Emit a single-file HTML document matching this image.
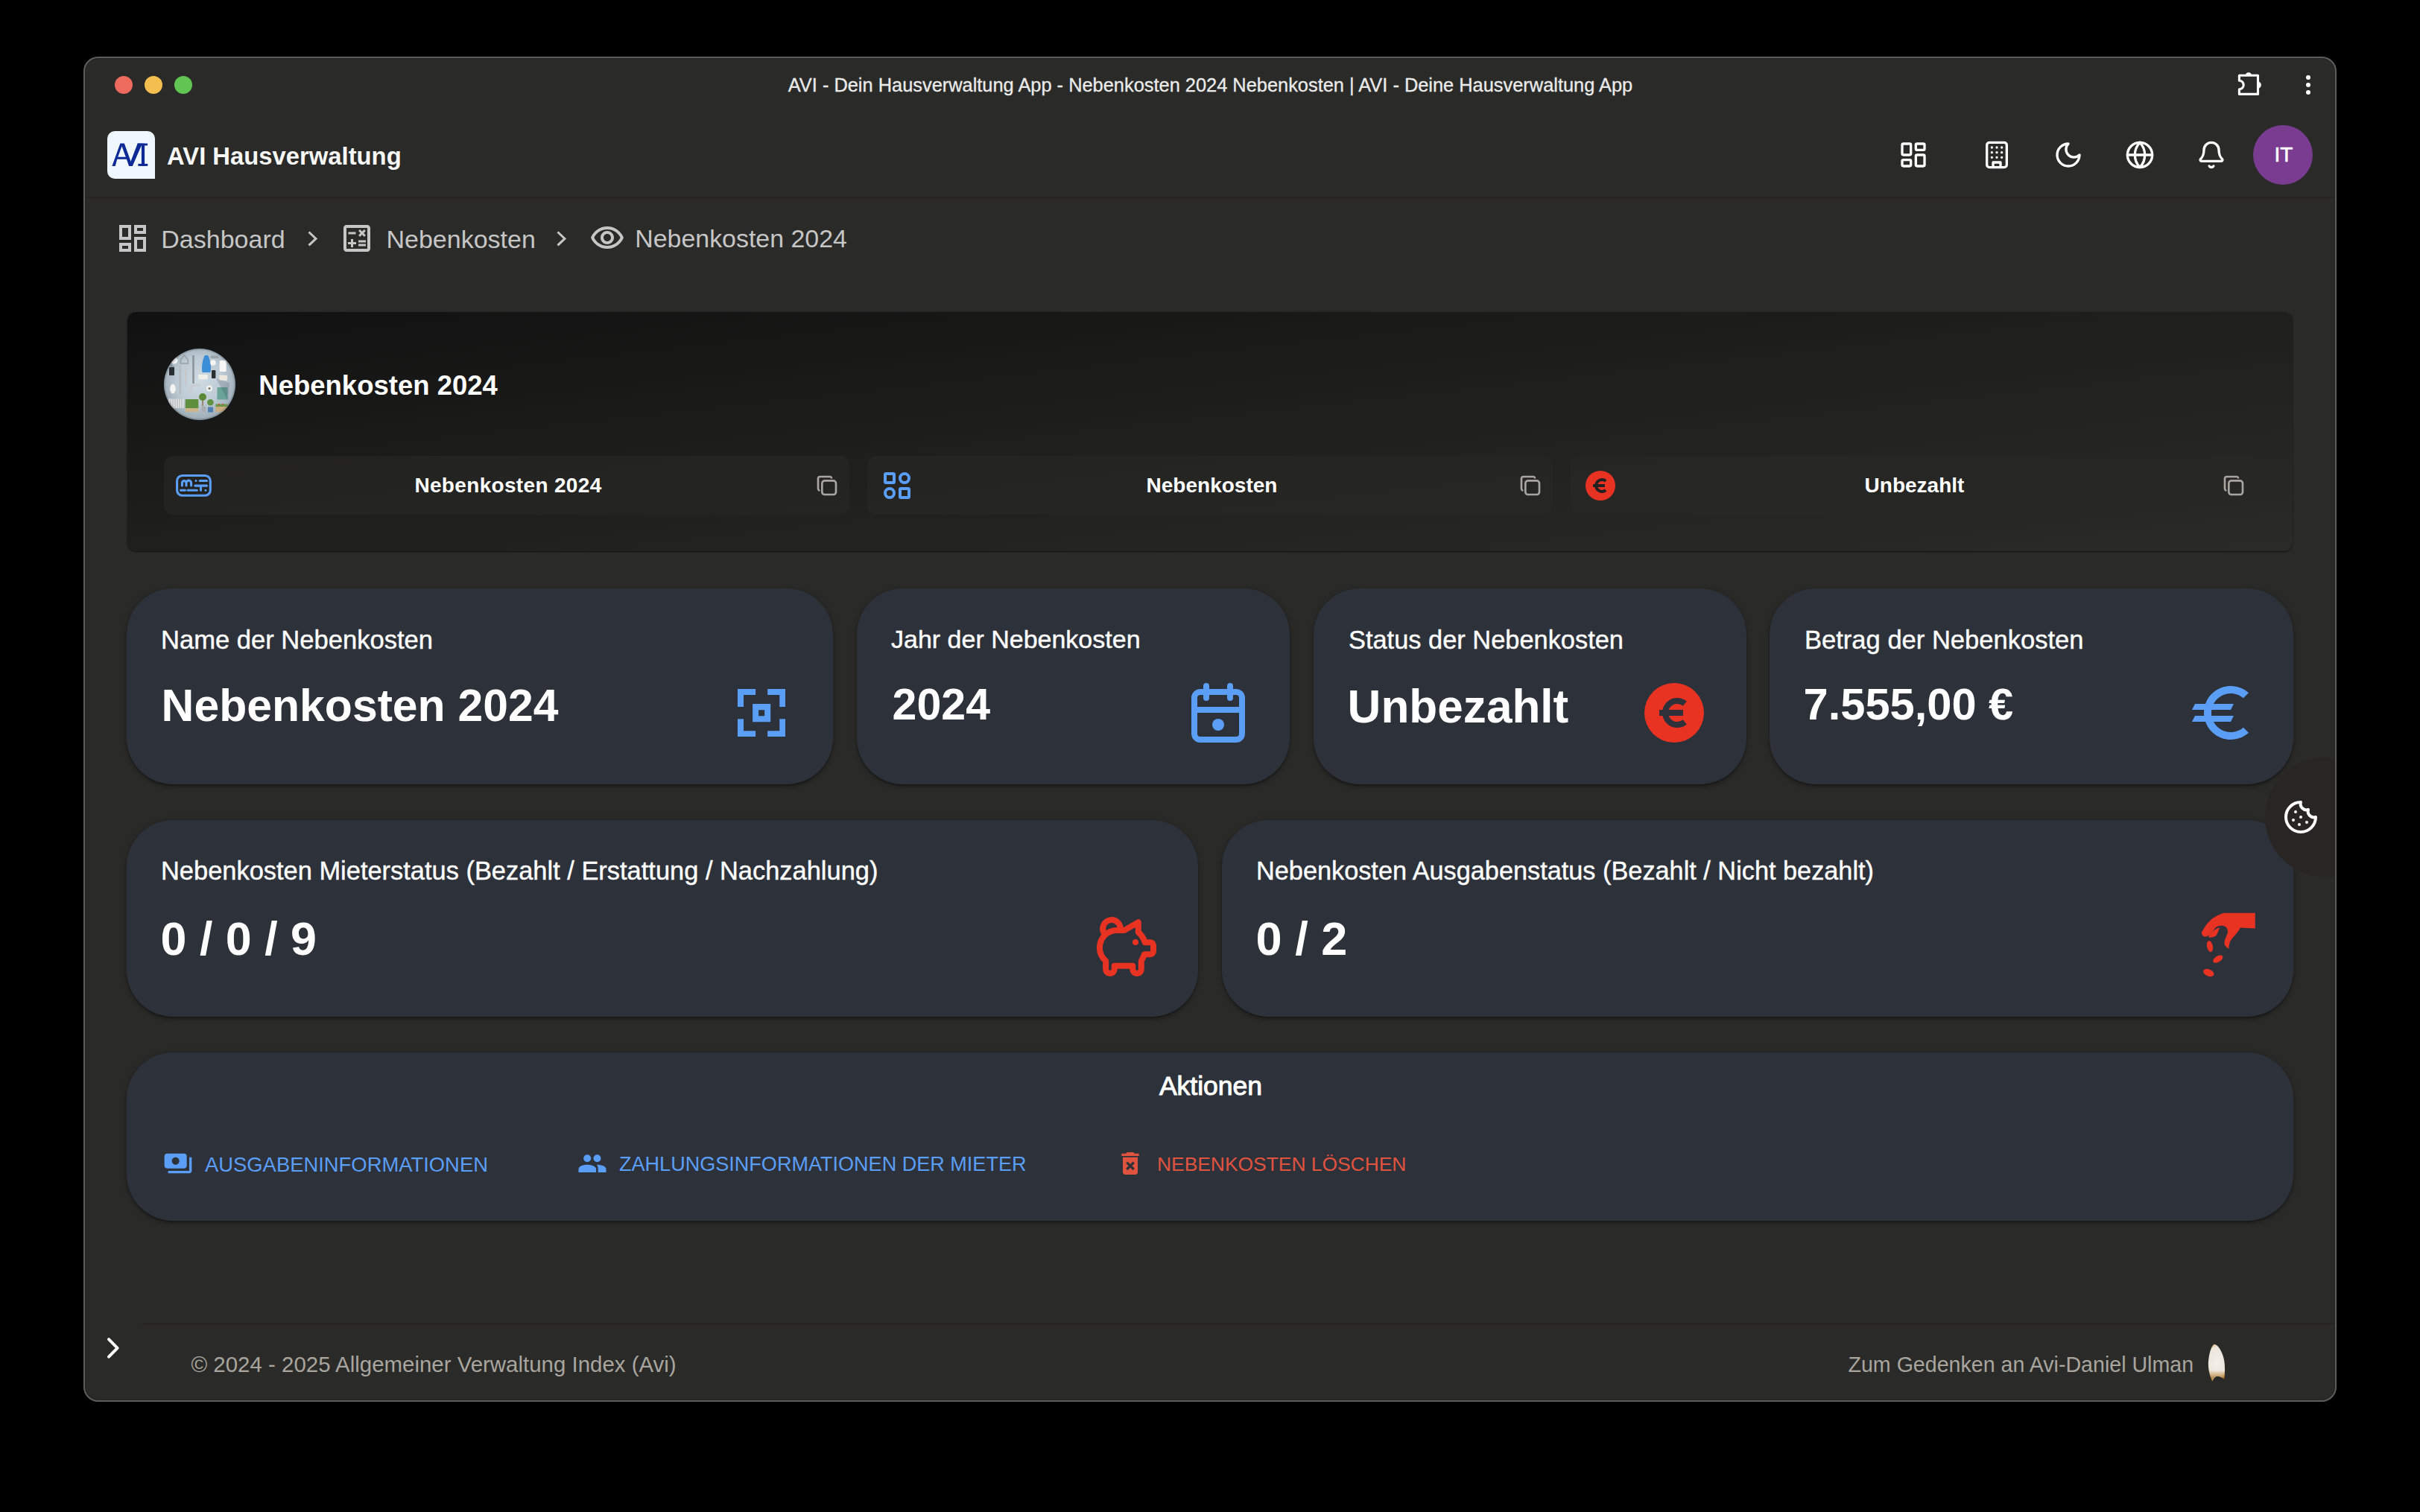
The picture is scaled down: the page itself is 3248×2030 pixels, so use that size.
<!DOCTYPE html>
<html><head><meta charset="utf-8"><title>AVI - Nebenkosten 2024</title>
<style>
html,body{margin:0;padding:0;}
body{width:3248px;height:2030px;background:#000;position:relative;overflow:hidden;font-family:"Liberation Sans", sans-serif;}
.t{position:absolute;white-space:nowrap;line-height:1;}
.card{position:absolute;background:#2d313a;border-radius:62px;box-shadow:0 3px 3px -2px rgba(0,0,0,.3),0 3px 4px 0 rgba(0,0,0,.2),0 1px 8px 0 rgba(0,0,0,.18);}
</style></head><body>
<div style="position:absolute;left:112px;top:76px;width:3024px;height:1806px;background:#2a2a28;border-radius:20px;box-shadow:inset 0 0 0 2px #5d5d5c,inset 0 0 0 3px #222221;"></div>
<div style="position:absolute;left:154px;top:102px;width:24px;height:24px;background:#ed6a5e;border-radius:50%;"></div>
<div style="position:absolute;left:194px;top:102px;width:24px;height:24px;background:#f5bf4f;border-radius:50%;"></div>
<div style="position:absolute;left:234px;top:102px;width:24px;height:24px;background:#61c554;border-radius:50%;"></div>
<div class="t" style="left:624.5px;width:2000px;text-align:center;top:101.5px;font-size:25.4px;color:#ebebeb;font-weight:400;-webkit-text-stroke:0.3px #ebebeb;">AVI - Dein Hausverwaltung App - Nebenkosten 2024 Nebenkosten | AVI - Deine Hausverwaltung App</div>
<svg style="position:absolute;left:2995px;top:90px;" width="50" height="45" viewBox="2995 90 50 45"><path d="M3005.4 101.3 H3030.5 V126.4 H3005.4 V119.8 A5.8 5.8 0 0 0 3005.4 108.2 Z" fill="none" stroke="#fff" stroke-width="3.1" stroke-linejoin="round"/><path d="M3013.6 101.5 A4.3 4.3 0 0 1 3022.2 101.5 Z" fill="#fff"/><path d="M3030.3 109.5 A4.6 4.6 0 0 1 3030.3 118.7 Z" fill="#fff"/></svg>
<div style="position:absolute;left:3095px;top:101px;width:6px;height:6px;background:#fff;border-radius:50%;"></div>
<div style="position:absolute;left:3095px;top:111px;width:6px;height:6px;background:#fff;border-radius:50%;"></div>
<div style="position:absolute;left:3095px;top:121px;width:6px;height:6px;background:#fff;border-radius:50%;"></div>
<div style="position:absolute;left:115px;top:264px;width:3018px;height:2px;background:#272323;"></div>
<div style="position:absolute;left:144px;top:176px;width:64px;height:64px;background:#f1f8fd;border-radius:10px 10px 0 10px;"></div>
<svg style="position:absolute;left:144px;top:176px;" width="64" height="64" viewBox="0 0 64 64"><g fill="#0d2a96"><path fill-rule="evenodd" d="M6.4 46.9 L17.4 16.6 L22.8 16.6 L33.8 46.9 L29.1 46.9 L25.9 37.7 L13.2 37.7 L10.7 46.9 Z M14.3 34.7 L24.8 34.7 L19.5 20.3 Z"/><path d="M29.1 46.9 L33.8 46.9 L45.9 19.3 L45.9 16.6 L40.7 16.6 Z"/><rect x="40.7" y="16.6" width="13.4" height="2.8"/><rect x="45.9" y="16.6" width="4.2" height="30.3"/><rect x="41.4" y="43.9" width="12.9" height="3"/></g></svg>
<div class="t" style="left:224.0px;top:193.8px;font-size:32.8px;color:#f7f7f5;font-weight:700;">AVI Hausverwaltung</div>
<svg style="position:absolute;left:2548px;top:188px;" width="40" height="40" viewBox="0 0 24 24"><g fill="none" stroke="#fff" stroke-width="2" stroke-linecap="round" stroke-linejoin="round"><rect x="3" y="3" width="7" height="9" rx="1"/><rect x="14" y="3" width="7" height="5" rx="1"/><rect x="14" y="12" width="7" height="9" rx="1"/><rect x="3" y="16" width="7" height="5" rx="1"/></g></svg>
<svg style="position:absolute;left:2660px;top:188px;" width="40" height="40" viewBox="0 0 24 24"><g fill="none" stroke="#fff" stroke-width="2" stroke-linecap="round" stroke-linejoin="round"><rect x="4" y="2" width="16" height="20" rx="2"/><path d="M9 22v-4h6v4"/><path d="M8 6h.01M16 6h.01M12 6h.01M12 10h.01M12 14h.01M16 10h.01M16 14h.01M8 10h.01M8 14h.01"/></g></svg>
<svg style="position:absolute;left:2756px;top:187.5px;" width="40" height="40" viewBox="0 0 24 24"><g fill="none" stroke="#fff" stroke-width="2" stroke-linecap="round" stroke-linejoin="round"><path d="M12 3a6 6 0 0 0 9 9 9 9 0 1 1-9-9Z"/></g></svg>
<svg style="position:absolute;left:2852px;top:188px;" width="40" height="40" viewBox="0 0 24 24"><g fill="none" stroke="#fff" stroke-width="2" stroke-linecap="round" stroke-linejoin="round"><circle cx="12" cy="12" r="10"/><path d="M12 2a14.5 14.5 0 0 0 0 20 14.5 14.5 0 0 0 0-20"/><path d="M2 12h20"/></g></svg>
<svg style="position:absolute;left:2948px;top:188px;" width="40" height="40" viewBox="0 0 24 24"><g fill="none" stroke="#fff" stroke-width="2" stroke-linecap="round" stroke-linejoin="round"><path d="M10.268 21a2 2 0 0 0 3.464 0"/><path d="M3.262 15.326A1 1 0 0 0 4 17h16a1 1 0 0 0 .74-1.673C19.41 13.956 18 12.499 18 8A6 6 0 0 0 6 8c0 4.499-1.411 5.956-2.738 7.326"/></g></svg>
<div style="position:absolute;left:3024px;top:168px;width:80px;height:80px;background:#7a3c91;border-radius:50%;"></div>
<div class="t" style="left:2065.0px;width:2000px;text-align:center;top:193.6px;font-size:28px;color:#fff;font-weight:400;-webkit-text-stroke:0.6px #fff;">IT</div>
<svg style="position:absolute;left:154px;top:296px;" width="48" height="48" viewBox="0 0 24 24"><path fill="#c6c6c6" d="M19 5v2h-4V5zM9 5v6H5V5zm10 8v6h-4v-6zM9 17v2H5v-2zM21 3h-8v6h8zM11 3H3v10h8zm10 8h-8v10h8zm-10 4H3v6h8z"/></svg>
<div class="t" style="left:216.3px;top:303.6px;font-size:34px;color:#c6c6c6;font-weight:400;">Dashboard</div>
<svg style="position:absolute;left:405px;top:305px;" width="30" height="30" viewBox="405 305 30 30"><path d="M414.5 311.5 L424 320.4 L414.5 329.3" fill="none" stroke="#c6c6c6" stroke-width="3"/></svg>
<svg style="position:absolute;left:455px;top:296px;" width="48" height="48" viewBox="0 0 24 24"><path fill="#c6c6c6" d="M19 3H5c-1.1 0-2 .9-2 2v14c0 1.1.9 2 2 2h14c1.1 0 2-.9 2-2V5c0-1.1-.9-2-2-2m0 16H5V5h14z"/><path fill="#c6c6c6" d="M11.25 7.72H6.25v1.5h5zM18 15.75h-5v1.5h5zm0-2.5h-5v1.5h5zM8 18h1.5v-2h2v-1.5h-2v-2H8v2H6v1.5h2zm6.09-7.05 1.41-1.41 1.41 1.41 1.06-1.06-1.41-1.42 1.41-1.41L16.91 6 15.5 7.41 14.09 6l-1.06 1.06 1.41 1.41-1.41 1.42z"/></svg>
<div class="t" style="left:518.5px;top:303.6px;font-size:34px;color:#c6c6c6;font-weight:400;">Nebenkosten</div>
<svg style="position:absolute;left:740px;top:305px;" width="30" height="30" viewBox="740 305 30 30"><path d="M748.5 311.5 L758 320.4 L748.5 329.3" fill="none" stroke="#c6c6c6" stroke-width="3"/></svg>
<svg style="position:absolute;left:790.5px;top:296px;" width="48" height="48" viewBox="0 0 24 24"><path fill="#c6c6c6" d="M12 6c3.79 0 7.17 2.13 8.82 5.5C19.17 14.87 15.79 17 12 17s-7.17-2.13-8.82-5.5C4.83 8.13 8.21 6 12 6m0-2C7 4 2.73 7.11 1 11.5 2.73 15.89 7 19 12 19s9.27-3.11 11-7.5C21.27 7.11 17 4 12 4m0 5c1.38 0 2.5 1.12 2.5 2.5S13.38 14 12 14s-2.5-1.12-2.5-2.5S10.62 9 12 9m0-2c-2.48 0-4.5 2.02-4.5 4.5S9.52 16 12 16s4.5-2.02 4.5-4.5S14.48 7 12 7"/></svg>
<div class="t" style="left:852.3px;top:303.6px;font-size:33.9px;color:#c6c6c6;font-weight:400;">Nebenkosten 2024</div>
<div style="position:absolute;left:171px;top:419px;width:2906px;height:321px;border-radius:12px;background:linear-gradient(to bottom right,#121111 0%,#1f1f1e 50%,#2a2a28 100%);box-shadow:0 1px 2px rgba(0,0,0,.55),0 0 1px rgba(0,0,0,.5);"></div>
<div style="position:absolute;left:220px;top:468px;width:96px;height:96px;border-radius:50%;background:radial-gradient(circle at 50% 45%,#cfdbe3 0%,#bccad3 45%,#9aa9b3 75%,#6d7a82 100%);"></div>
<svg style="position:absolute;left:220px;top:468px;" width="96" height="96" viewBox="0 0 96 96"><defs><clipPath id="ac"><circle cx="48" cy="48" r="48"/></clipPath></defs><g clip-path="url(#ac)"><circle cx="14" cy="16" r="4.5" fill="#eef0f0"/><path d="M22.4 15 L27.3 9.1 L32.3 15 V20 H22.4 Z" fill="none" stroke="#9a9fa3" stroke-width="1.6"/><rect x="38.2" y="9" width="2.6" height="38" fill="#8d9499"/><path d="M51.5 32 C50 24 52 14 55 9 H59 C62 14 64 24 62.5 32 Z" fill="#3a8ed8"/><rect x="62.4" y="9.6" width="11" height="3.4" rx="1.5" fill="#9ba1a5"/><circle cx="66" cy="19" r="3.8" fill="#f4f4f2"/><rect x="74.7" y="16" width="9" height="15" rx="1" fill="#f6f6f4"/><rect x="7" y="25" width="7" height="11" rx="1" fill="#2a2f33"/><rect x="20.3" y="23" width="3" height="38" fill="#b7bcc0"/><rect x="28" y="27" width="2.8" height="22" fill="#c5c9cc"/><rect x="46.3" y="35" width="12.6" height="6.4" fill="#f0eee8"/><rect x="64" y="29" width="5.4" height="11" rx="1" fill="#2b2f31"/><rect x="74.3" y="35.8" width="10.6" height="7" fill="#ece8df"/><ellipse cx="12" cy="54" rx="3.8" ry="6.5" fill="#f3f3f1"/><path d="M36 61 V53 C36 50 39 49 43 49 H49" fill="none" stroke="#c9cdd0" stroke-width="3"/><circle cx="61" cy="53.5" r="4" fill="#f2f2ef"/><circle cx="61" cy="53.5" r="1.5" fill="#6b6b68"/><rect x="71.5" y="52" width="14" height="16.5" rx="1" fill="#6aa398"/><rect x="6.3" y="67.3" width="20.3" height="12.7" fill="#e4e6e6"/><path d="M9 67v13M12 67v13M15 67v13M18 67v13M21 67v13M24 67v13" stroke="#9ea3a6" stroke-width="0.9"/><rect x="28.8" y="68" width="17.5" height="12" fill="#5d8f3d"/><rect x="28.8" y="80" width="17.5" height="5" fill="#cdb68c"/><circle cx="52" cy="65" r="5" fill="#5b8a36"/><rect x="51.3" y="69" width="1.4" height="8" fill="#8b6b45"/><circle cx="62.4" cy="72.2" r="4.3" fill="#5f9140"/><rect x="59" y="78.5" width="7" height="7" fill="#4e7fb3"/><rect x="50.5" y="77.8" width="5.6" height="7.8" fill="#a9adb0"/><rect x="69.4" y="78" width="16.2" height="7" fill="#c9ad80"/><rect x="69.4" y="74.5" width="16.2" height="3.5" fill="#6c9a4a"/><circle cx="74" cy="75" r="0.9" fill="#d23a2e"/><circle cx="79" cy="74.8" r="0.9" fill="#d23a2e"/><path d="M8 20 L14 24 L12 38 Z" fill="rgba(40,50,60,.25)"/><path d="M70 40 L88 46 L86 70 Z" fill="rgba(40,50,60,.18)"/></g><circle cx="48" cy="48" r="47" fill="none" stroke="rgba(30,40,50,.18)" stroke-width="2"/></svg>
<div class="t" style="left:347.3px;top:500.2px;font-size:36.5px;color:#fff;font-weight:700;">Nebenkosten 2024</div>
<div style="position:absolute;left:220px;top:612px;width:920px;height:79px;border-radius:12px;background:rgba(40,40,39,0.6);"></div>
<div style="position:absolute;left:1164px;top:612px;width:920px;height:79px;border-radius:12px;background:rgba(40,40,39,0.6);"></div>
<div style="position:absolute;left:2108px;top:612px;width:920px;height:79px;border-radius:12px;background:rgba(40,40,39,0.6);"></div>
<svg style="position:absolute;left:226px;top:625px;" width="70" height="55" viewBox="226 625 70 55"><g fill="none" stroke="#5b9ef6" stroke-width="3.1" stroke-linecap="round" stroke-linejoin="round"><rect x="237.6" y="638.5" width="44.7" height="26.7" rx="7"/><path d="M244.4 651.9 V648.4 A2.8 2.8 0 0 1 250 648.4 V651.9 M250 648.4 A3.3 3.3 0 0 1 256.6 648.4 V651.9"/><path d="M263 645.5 h.01 M268.2 645.5 H277.6 M261.8 652.1 H277.6 M269.5 652.1 V658.2 M276 658.3 h.01 M242.5 658.3 H248.5 M252 658.3 H264.4"/></g></svg>
<svg style="position:absolute;left:1179.8px;top:627.9px;" width="48" height="48" viewBox="0 0 24 24"><g fill="none" stroke="#5b9ef6" stroke-width="2" stroke-linecap="round" stroke-linejoin="round"><rect x="4" y="4" width="6" height="6" rx=".6"/><rect x="14" y="14" width="6" height="6" rx=".6"/><circle cx="17" cy="7" r="3"/><circle cx="7" cy="17" r="3"/></g></svg>
<svg style="position:absolute;left:2128px;top:632px;" width="40" height="40" viewBox="0 0 80 80"><circle cx="40" cy="40" r="40" fill="#e83323"/><path d="M54.3 27.7 A16 16 0 1 0 54.3 52.3" fill="none" stroke="#202020" stroke-width="8"/><rect x="20" y="36" width="32" height="8" fill="#202020"/></svg>
<svg style="position:absolute;left:1094.4px;top:636.4px;" width="32" height="32" viewBox="0 0 24 24"><g fill="none" stroke="#a9a6a1" stroke-width="2" stroke-linecap="round" stroke-linejoin="round"><path d="M7 9.667A2.667 2.667 0 0 1 9.667 7h8.666A2.667 2.667 0 0 1 21 9.667v8.666A2.667 2.667 0 0 1 18.333 21H9.667A2.667 2.667 0 0 1 7 18.333z"/><path d="M4.012 16.737A2.005 2.005 0 0 1 3 15V5c0-1.1.9-2 2-2h10c.75 0 1.158.385 1.5 1"/></g></svg>
<svg style="position:absolute;left:2038.4px;top:636.4px;" width="32" height="32" viewBox="0 0 24 24"><g fill="none" stroke="#a9a6a1" stroke-width="2" stroke-linecap="round" stroke-linejoin="round"><path d="M7 9.667A2.667 2.667 0 0 1 9.667 7h8.666A2.667 2.667 0 0 1 21 9.667v8.666A2.667 2.667 0 0 1 18.333 21H9.667A2.667 2.667 0 0 1 7 18.333z"/><path d="M4.012 16.737A2.005 2.005 0 0 1 3 15V5c0-1.1.9-2 2-2h10c.75 0 1.158.385 1.5 1"/></g></svg>
<svg style="position:absolute;left:2982.4px;top:636.4px;" width="32" height="32" viewBox="0 0 24 24"><g fill="none" stroke="#a9a6a1" stroke-width="2" stroke-linecap="round" stroke-linejoin="round"><path d="M7 9.667A2.667 2.667 0 0 1 9.667 7h8.666A2.667 2.667 0 0 1 21 9.667v8.666A2.667 2.667 0 0 1 18.333 21H9.667A2.667 2.667 0 0 1 7 18.333z"/><path d="M4.012 16.737A2.005 2.005 0 0 1 3 15V5c0-1.1.9-2 2-2h10c.75 0 1.158.385 1.5 1"/></g></svg>
<div class="t" style="left:-318.0px;width:2000px;text-align:center;top:637.6px;font-size:28px;color:#fff;font-weight:700;letter-spacing:0.33px;">Nebenkosten 2024</div>
<div class="t" style="left:626.5px;width:2000px;text-align:center;top:637.6px;font-size:28px;color:#fff;font-weight:700;">Nebenkosten</div>
<div class="t" style="left:1569.5px;width:2000px;text-align:center;top:637.6px;font-size:28px;color:#fff;font-weight:700;">Unbezahlt</div>
<div class="card" style="left:170px;top:790px;width:948px;height:263px;"></div>
<div class="card" style="left:1150px;top:790px;width:581px;height:263px;"></div>
<div class="card" style="left:1763px;top:790px;width:581px;height:263px;"></div>
<div class="card" style="left:2375px;top:790px;width:703px;height:263px;"></div>
<div class="card" style="left:170px;top:1100.5px;width:1438px;height:264.5px;"></div>
<div class="card" style="left:1640px;top:1100.5px;width:1438px;height:264.5px;"></div>
<div class="card" style="left:170px;top:1412.5px;width:2908px;height:226.5px;"></div>
<div class="t" style="left:216.0px;top:842.0px;font-size:34.57px;color:#fff;font-weight:400;-webkit-text-stroke:0.4px #fff;">Name der Nebenkosten</div>
<div class="t" style="left:1196.0px;top:840.6px;font-size:34px;color:#fff;font-weight:400;-webkit-text-stroke:0.4px #fff;">Jahr der Nebenkosten</div>
<div class="t" style="left:1810.0px;top:842.0px;font-size:34.4px;color:#fff;font-weight:400;-webkit-text-stroke:0.4px #fff;">Status der Nebenkosten</div>
<div class="t" style="left:2422.0px;top:842.0px;font-size:34.56px;color:#fff;font-weight:400;-webkit-text-stroke:0.4px #fff;">Betrag der Nebenkosten</div>
<div class="t" style="left:216.6px;top:917.4px;font-size:60.7px;color:#fff;font-weight:700;">Nebenkosten 2024</div>
<div class="t" style="left:1197.6px;top:915.6px;font-size:59.1px;color:#fff;font-weight:700;">2024</div>
<div class="t" style="left:1808.6px;top:917.6px;font-size:62.1px;color:#fff;font-weight:700;">Unbezahlt</div>
<div class="t" style="left:2420.6px;top:915.5px;font-size:59.6px;color:#fff;font-weight:700;">7.555,00 €</div>
<svg style="position:absolute;left:989.8px;top:924.8px;" width="64.3" height="64.3" viewBox="0 0 64 64"><g fill="#5b9ef6"><path d="M0 0H24V8H8V24H0Z"/><path d="M40 0H64V24H56V8H40Z"/><path d="M0 40H8V56H24V64H0Z"/><path d="M56 40H64V64H40V56H56Z"/><path fill-rule="evenodd" d="M20 20H44V44H20Z M28 28V36H36V28Z"/></g></svg>
<svg style="position:absolute;left:1586.9px;top:908.9px;" width="96" height="96" viewBox="0 0 24 24"><g fill="none" stroke="#5b9ef6" stroke-width="2" stroke-linecap="round" stroke-linejoin="round"><rect x="4" y="5" width="16" height="16" rx="2"/><path d="M16 3v4M8 3v4M4 11h16"/></g><circle cx="12" cy="16" r="2" fill="#5b9ef6"/></svg>
<svg style="position:absolute;left:2207px;top:917px;" width="80" height="80" viewBox="0 0 80 80"><circle cx="40" cy="40" r="40" fill="#e83323"/><path d="M54.3 27.7 A16 16 0 1 0 54.3 52.3" fill="none" stroke="#2e313a" stroke-width="8"/><rect x="20" y="36" width="32" height="8" fill="#2e313a"/></svg>
<svg style="position:absolute;left:2933.9px;top:909px;" width="96" height="96" viewBox="0 0 24 24"><path fill="#5b9ef6" d="M15 18.5c-2.51 0-4.68-1.42-5.76-3.5H15l1-2H8.58c-.05-.33-.08-.66-.08-1s.03-.67.08-1H15l1-2H9.24C10.32 6.92 12.5 5.5 15 5.5c1.61 0 3.09.59 4.23 1.570L21 5.3C19.41 3.87 17.3 3 15 3c-3.92 0-7.240 2.510-8.480 6H3l-1 2h4.060c-.04.330-.06.660-.06 1s.02.67.06 1H3l-1 2h4.52c1.24 3.49 4.56 6 8.48 6 2.31 0 4.41-.87 6-2.3l-1.78-1.77c-1.13.98-2.6 1.57-4.22 1.57"/></svg>
<div class="t" style="left:216.0px;top:1152.0px;font-size:34.43px;color:#fff;font-weight:400;-webkit-text-stroke:0.4px #fff;">Nebenkosten Mieterstatus (Bezahlt / Erstattung / Nachzahlung)</div>
<div class="t" style="left:1686.0px;top:1152.1px;font-size:34.29px;color:#fff;font-weight:400;-webkit-text-stroke:0.4px #fff;">Nebenkosten Ausgabenstatus (Bezahlt / Nicht bezahlt)</div>
<div class="t" style="left:215.6px;top:1229.0px;font-size:62.8px;color:#fff;font-weight:700;">0 / 0 / 9</div>
<div class="t" style="left:1685.6px;top:1229.0px;font-size:63.1px;color:#fff;font-weight:700;">0 / 2</div>
<svg style="position:absolute;left:1460px;top:1220px;" width="100" height="100" viewBox="0 0 100 100"><g fill="none" stroke="#e83323" stroke-width="8" stroke-linecap="round" stroke-linejoin="round"><path d="M21.5 32.5 A11.85 11.85 0 1 1 43.8 28"/><path d="M39.7 29.1 H48.9 L67.8 18.2 V31.7 C71.5 34.5 74.8 39.5 76.7 45.3 H84 A4 4 0 0 1 88 49.3 V57.2 A4 4 0 0 1 84 61.2 H76 C74.8 64.5 73.5 67.5 71.8 70.1 V81.3 A5.8 5.8 0 0 1 60.2 81.3 V76.7 H35.7 V81.3 A5.8 5.8 0 0 1 24.1 81.3 V70.1 C18.5 65 15.9 59 15.9 52.9 C15.9 39 26 29.1 39.7 29.1 Z"/></g><circle cx="64" cy="45" r="4" fill="#e83323"/></svg>
<svg style="position:absolute;left:2940px;top:1215px;" width="100" height="100" viewBox="0 0 100 100"><g fill="#e83323"><path d="M45.1 10.8 H86.8 V31.6 L66.7 30.6 C64 37 58 42 54.2 47.2 C52 50.5 51.6 55 51.4 58.7 C48 57 45.5 54 45.5 51.4 C45.5 45 50 40 50 36.1 C50 30 46 27.8 41.7 27.8 C37 27.8 34.5 29.5 32.6 31.5 C29 36 26 41 22.9 41.7 C19.5 43 16 43 14.6 37.5 C18 31 21 26 25 22.2 C31 16 38 13 45.1 10.8 Z"/><path d="M24 43.4 C26 38 32 32 39.6 30.2 C37 34 36.5 40 33 42 C30 43.5 27 43.8 24 43.4 Z"/><ellipse cx="26" cy="55.6" rx="3.9" ry="7.6" transform="rotate(-12 26 55.6)"/><ellipse cx="36.8" cy="72.6" rx="7.4" ry="3.9" transform="rotate(-32 36.8 72.6)"/><ellipse cx="24.3" cy="91" rx="7.6" ry="4.6" transform="rotate(22 24.3 91)"/></g></svg>
<div class="t" style="left:625.0px;width:2000px;text-align:center;top:1441.4px;font-size:35.5px;color:#fff;font-weight:400;-webkit-text-stroke:1px #fff;">Aktionen</div>
<svg style="position:absolute;left:219.2px;top:1542.2px;" width="40" height="40" viewBox="0 0 24 24"><path fill="#5b9ef6" d="M19 14V6c0-1.1-.9-2-2-2H3c-1.1 0-2 .9-2 2v8c0 1.1.9 2 2 2h14c1.1 0 2-.9 2-2m-9-1c-1.66 0-3-1.34-3-3s1.34-3 3-3 3 1.34 3 3-1.34 3-3 3m13-6v11c0 1.1-.9 2-2 2H4v-2h17V7z"/></svg>
<div class="t" style="left:275.0px;top:1550.1px;font-size:27.4px;color:#5b9ef6;font-weight:400;">AUSGABENINFORMATIONEN</div>
<svg style="position:absolute;left:770px;top:1540px;" width="50" height="45" viewBox="0 0 50 45"><g fill="#5b9ef6"><circle cx="18.2" cy="15.2" r="5"/><circle cx="31.5" cy="15.2" r="5"/><path d="M6.5 34.1 V29.5 C6.5 26 12 23.7 18.2 23.7 C24.4 23.7 30.1 26 30.1 29.5 V34.1 Z"/><path d="M31 23.7 C38 23.7 43.5 26 43.5 29.5 V34.1 H32.7 V29.5 C32.7 27 32 25 31 23.7 Z"/></g></svg>
<div class="t" style="left:831.0px;top:1550.1px;font-size:27.05px;color:#5b9ef6;font-weight:400;">ZAHLUNGSINFORMATIONEN DER MIETER</div>
<svg style="position:absolute;left:1496.5px;top:1541.8px;" width="40" height="40" viewBox="0 0 24 24"><path fill="#e0533f" d="M6 19c0 1.1.9 2 2 2h8c1.1 0 2-.9 2-2V7H6zm2.46-7.12 1.41-1.41L12 12.59l2.12-2.12 1.41 1.41L13.41 14l2.12 2.12-1.41 1.41L12 15.41l-2.12 2.12-1.41-1.41L10.590 14zM15.5 4l-1-1h-5l-1 1H5v2h14V4z"/></svg>
<div class="t" style="left:1553.0px;top:1550.2px;font-size:26.4px;color:#e0533f;font-weight:400;">NEBENKOSTEN LÖSCHEN</div>
<div style="position:absolute;left:3040px;top:1017px;width:93px;height:160px;background:#292524;border-radius:80px 0 0 80px;"></div>
<svg style="position:absolute;left:3063.9px;top:1072.9px;" width="48" height="48" viewBox="0 0 24 24"><g fill="none" stroke="#fff" stroke-width="2" stroke-linecap="round" stroke-linejoin="round"><path d="M12 2a10 10 0 1 0 10 10 4 4 0 0 1-5-5 4 4 0 0 1-5-5"/><path d="M8.5 8.5v.01M16 15.5v.01M12 12v.01M11 17v.01M7 14v.01"/></g></svg>
<div style="position:absolute;left:191px;top:1776px;width:2942px;height:2px;background:#272323;"></div>
<svg style="position:absolute;left:136px;top:1790px;" width="40" height="40" viewBox="136 1790 40 40"><path d="M146 1798.2 L157.6 1809.9 L146 1821.6" fill="none" stroke="#fff" stroke-width="4" stroke-linecap="round" stroke-linejoin="round"/></svg>
<div class="t" style="left:256.5px;top:1817.3px;font-size:29.45px;color:#a9a59f;font-weight:400;">© 2024 - 2025 Allgemeiner Verwaltung Index (Avi)</div>
<div class="t" style="left:2480.5px;top:1817.5px;font-size:28.6px;color:#a9a59f;font-weight:400;">Zum Gedenken an Avi-Daniel Ulman</div>
<svg style="position:absolute;left:2960px;top:1800px;" width="30" height="60" viewBox="0 0 30 60"><defs><radialGradient id="fr" cx="15" cy="30" r="19" gradientUnits="userSpaceOnUse" gradientTransform="translate(15 31) scale(0.78 1.42) translate(-15 -31)"><stop offset="0" stop-color="#f1efea"/><stop offset=".8" stop-color="#ece5da"/><stop offset=".93" stop-color="#dcbb86"/><stop offset="1" stop-color="#a86a22"/></radialGradient><linearGradient id="fb" x1="0" y1="0" x2="0" y2="1"><stop offset="0" stop-color="#c58a3c" stop-opacity="0"/><stop offset=".7" stop-color="#c58a3c" stop-opacity="0"/><stop offset=".8" stop-color="#c08437" stop-opacity=".45"/><stop offset=".9" stop-color="#a56a25" stop-opacity=".7"/><stop offset="1" stop-color="#a56a25" stop-opacity=".3"/></linearGradient></defs><path d="M11.8 4.7 C7 7 4 22 3.9 32 C3.9 42 7.5 50 9.4 54.7 C11 50 13.5 47.8 15.9 47.8 C19 47.8 23 49.5 25.2 51.5 C26.5 44 26.5 30 24.3 22.8 C22.5 15 17 5 11.8 4.7 Z" fill="url(#fr)"/><path d="M11.8 4.7 C7 7 4 22 3.9 32 C3.9 42 7.5 50 9.4 54.7 C11 50 13.5 47.8 15.9 47.8 C19 47.8 23 49.5 25.2 51.5 C26.5 44 26.5 30 24.3 22.8 C22.5 15 17 5 11.8 4.7 Z" fill="url(#fb)"/></svg>
</body></html>
